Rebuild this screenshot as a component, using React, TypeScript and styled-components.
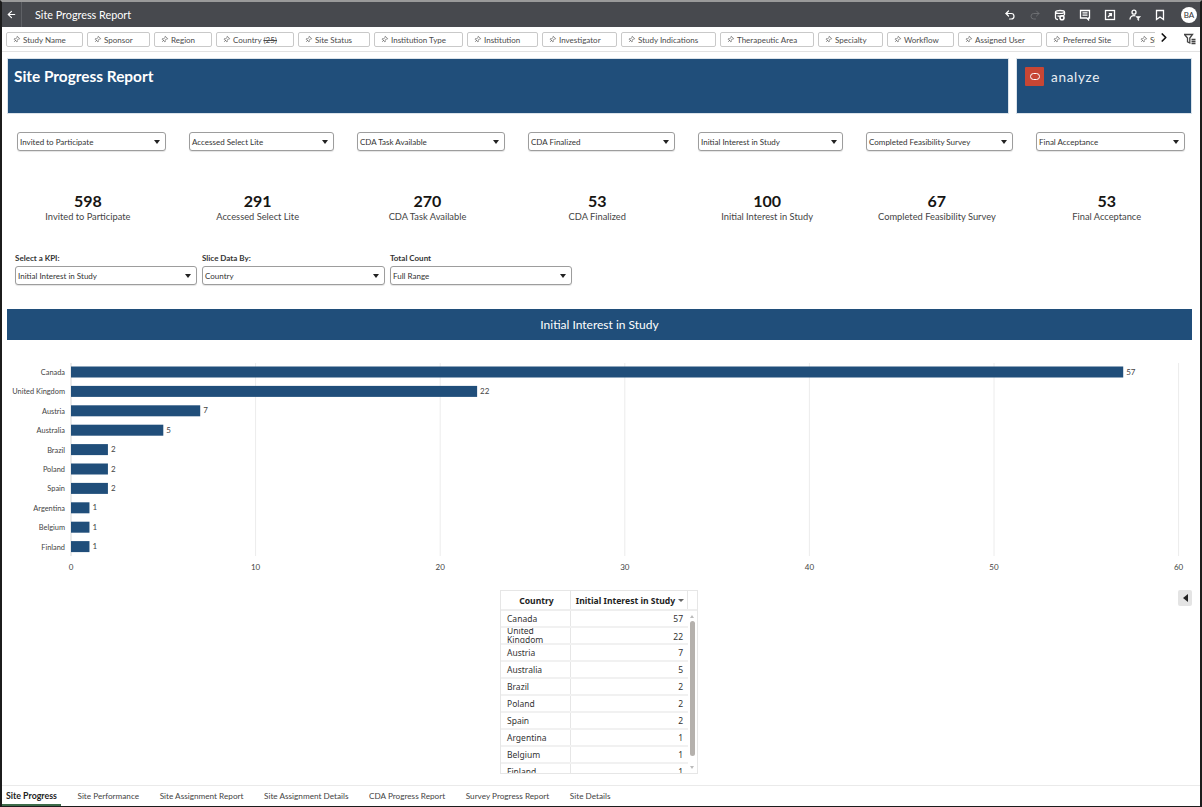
import React from "react";
import styled, { createGlobalStyle } from "styled-components";
import { ArrowLeft, Undo2, Redo2, Pin, ChevronRight } from "lucide-react";

const Global = createGlobalStyle`
  html, body { margin: 0; padding: 0; background: #fff; }
  body { font-family: "Lato", "Noto Sans", "Liberation Sans", sans-serif; color: #2b2b2b; }
  * { box-sizing: border-box; }
`;

const Page = styled.div`
  width: 1202px; height: 807px; overflow: hidden; position: relative; background: #fff;
  border-left: 2px solid #1c1c1c; border-right: 2px solid #1c1c1c; border-bottom: 1px solid #1c1c1c; border-top: 2px solid #9a9a9a;
  display: flex; flex-direction: column;
`;
const TopBar = styled.header`
  height: 25px; flex: none; background: #47494e; color: #fff; display: flex; align-items: center;
`;
const BackCell = styled.div`
  width: 20px; height: 100%; display: flex; align-items: center; justify-content: center; border-right: 1px solid #5f6166;
`;
const TopTitle = styled.div`
  font-size: 10.8px; margin-left: 13px; flex: 1;
`;
const TopIcons = styled.div`
  display: flex; align-items: center; gap: 13px; padding-right: 3px;
`;
const IconSvg = styled.svg.attrs({ viewBox: "0 0 12 12", width: 12, height: 12, fill: "none", stroke: "currentColor" })`
  display: block; flex: none; stroke-width: 1.3;
`;
const Avatar = styled.div`
  width: 16px; height: 16px; margin-left: 2px; border-radius: 50%; background: #fff; color: #333; font-size: 8px;
  display: flex; align-items: center; justify-content: center;
`;
const FilterBar = styled.div`
  height: 25px; flex: none; display: flex; align-items: flex-start; border-bottom: 1px solid #e2e2e2; padding-top: 5px; padding-left: 4px; position: relative;
`;
const Chips = styled.div`
  display: flex; gap: 4px; width: 1149px; overflow: hidden;
`;
const Chip = styled.div<{ $w: number }>`
  flex: none; width: ${p => p.$w}px; height: 15px; border: 1px solid #c9c9c9; border-radius: 2px; background: #fff;
  display: flex; align-items: center; padding-left: 6px; gap: 3px; font-size: 8px; color: #4a4a4a; white-space: nowrap; overflow: hidden;
  s { text-decoration: line-through; }
`;
const ChevronBtn = styled.div`
  width: 14px; display: flex; justify-content: center; margin-left: 2px; margin-top: -2px; color: #111;
`;
const FilterBtn = styled.div`
  margin-left: 13px; margin-top: 1px; color: #444;
`;
const Banners = styled.div`
  display: flex; gap: 7px; padding: 6px 0 0 5px; flex: none;
`;
const Banner = styled.div<{ $w: number }>`
  width: ${p => p.$w}px; height: 56px; background: #204e7a; color: #fff; padding: 8px 6px; display: flex; align-items: flex-start; border: 1px solid #dbe3ea;
`;
const BannerTitle = styled.h1`
  margin: -1px 0 0; font-size: 15.4px; font-weight: 700; line-height: 20px;
`;
const Logo = styled.div`
  width: 19px; height: 19px; background: #c74634; border-radius: 1px; display: flex; align-items: center; justify-content: center; margin: 0 7px 0 2px;
`;
const LogoRing = styled.div`
  width: 10px; height: 7px; border: 1.5px solid #fff; border-radius: 3.5px;
`;
const LogoText = styled.div`
  font-size: 13.5px; line-height: 18px; letter-spacing: 0.7px; color: #e8eef4; margin-top: 1px;
`;
const SelectRow = styled.div`
  display: flex; gap: 23px; padding: 18px 0 0 15px; flex: none;
`;
const Select = styled.div<{ $w: number }>`
  width: ${p => p.$w}px; height: 19px; border: 1px solid #9d9d9d; border-radius: 3px; background: #fff; display: flex; align-items: center; justify-content: space-between;
  padding: 0 5px 0 2px; font-size: 8px; color: #333; box-shadow: 0 1px 1px #e4e4e4;
`;
const Caret = styled.span`
  width: 0; height: 0; border-left: 3.5px solid transparent; border-right: 3.5px solid transparent; border-top: 4px solid #222;
`;
const KpiRow = styled.div`
  display: grid; grid-template-columns: repeat(7, 169.8px); padding: 41px 0 0 1px; flex: none;
`;
const Kpi = styled.div`
  text-align: center;
`;
const KpiValue = styled.div`
  font-size: 16px; font-weight: 700; line-height: 18px; color: #161513;
`;
const KpiLabel = styled.div`
  font-size: 9.3px; line-height: 12px; color: #444; margin-top: 1px;
`;
const Prompts = styled.div`
  display: flex; gap: 5px; padding: 30px 0 0 13px; flex: none;
`;
const Prompt = styled.div`
  display: flex; flex-direction: column; gap: 3px;
`;
const PromptLabel = styled.label`
  font-size: 8px; font-weight: 700; line-height: 10px; color: #333;
`;
const SectionBar = styled.div`
  width: 1185px; height: 31px; margin: 24px 0 0 5px; flex: none; background: #204e7a; color: #fff; font-size: 12px;
  display: flex; align-items: center; justify-content: center;
`;
const ChartSvg = styled.svg`
  display: block; flex: none; margin-top: 15px; margin-left: -2px;
  text { font-family: "Lato", "Noto Sans", sans-serif; font-size: 8px; fill: #444; }
  text.name { font-size: 7.4px; }
`;
const TableArea = styled.div`
  position: relative; flex: none; height: 184px; margin-top: 18px; display: flex; justify-content: flex-start; padding-left: 498px;
`;
const CollapseBtn = styled.div`
  position: absolute; left: 1176px; top: 0; width: 14px; height: 16px; background: #e4e4e4; border-radius: 2px; display: flex; align-items: center; justify-content: center;
  &::before { content: ""; border-top: 4px solid transparent; border-bottom: 4px solid transparent; border-right: 5px solid #222; }
`;
const TableFrame = styled.div`
  width: 198px; height: 184px; border: 1px solid #e6e6e6; position: relative; overflow: hidden;
`;
const Head = styled.div`
  display: grid; grid-template-columns: 70px 117px 9px; height: 20px; border-bottom: 2px solid #eee; font-size: 8.6px; font-weight: 700; color: #222;
  font-family: "Noto Sans", sans-serif;
`;
const HeadCell = styled.div`
  display: flex; align-items: center; justify-content: center; border-right: 1px solid #e6e6e6; gap: 3px; padding: 1px 0 0 2px;
  i { border-left: 3px solid transparent; border-right: 3px solid transparent; border-top: 3px solid #666; }
`;
const Rows = styled.div`
  width: 187px;
`;
const Row = styled.div`
  display: grid; grid-template-columns: 70px 117px; height: 17px; border-bottom: 2px solid #f1f1f1;
  font-family: "Noto Sans", sans-serif; font-size: 8.5px; color: #333; overflow: hidden;
`;
const NameCell = styled.div<{ $wrapped?: boolean }>`
  padding: 0 6px; border-right: 1px solid #e6e6e6; display: flex; align-items: ${p => (p.$wrapped ? "flex-start" : "center")}; line-height: 9px;
  span { display: block; margin-top: ${p => (p.$wrapped ? "-2px" : "0")}; }
`;
const ValueCell = styled.div`
  padding: 0 5px; display: flex; align-items: center; justify-content: flex-end;
`;
const Scroll = styled.div`
  position: absolute; right: 0; top: 20px; bottom: 0; width: 10px;
  &::before { content: ""; position: absolute; left: 3px; top: 10px; bottom: 17px; width: 5px; border-radius: 3px; background: #b5b1ad; }
`;
const ScrollArrow = styled.span<{ $up?: boolean }>`
  position: absolute; left: 3px; ${p => (p.$up ? "top: 4px;" : "bottom: 4px;")} border-left: 2.5px solid transparent; border-right: 2.5px solid transparent;
  ${p => (p.$up ? "border-bottom: 3px solid #bbb;" : "border-top: 3px solid #bbb;")}
`;
const Tabs = styled.nav`
  position: absolute; left: 0; right: 0; bottom: 0; height: 21px; border-top: 1px solid #eaeaea; background: #fff; display: flex; padding-left: 4px; gap: 20.6px; font-size: 8.2px; color: #444;
`;
const Tab = styled.div<{ $active?: boolean }>`
  height: 19px; display: flex; align-items: center; position: relative;
  ${p => p.$active && `
    font-weight: 700; font-size: 8.8px; color: #222;
    &::after { content: ""; position: absolute; left: -4px; right: -4px; bottom: -1px; height: 2px; background: #3d6b4a; }
  `}
`;

const chips: [string, number][] = [["Study Name", 77], ["Sponsor", 63], ["Region", 58], ["Country", 78], ["Site Status", 72], ["Institution Type", 89], ["Institution", 71], ["Investigator", 75], ["Study Indications", 95], ["Therapeutic Area", 94], ["Specialty", 65], ["Workflow", 67], ["Assigned User", 84], ["Preferred Site", 83], ["Study", 60]];
const kpis: [string, number, number][] = [["Invited to Participate", 598, 149], ["Accessed Select Lite", 291, 145], ["CDA Task Available", 270, 148], ["CDA Finalized", 53, 147], ["Initial Interest in Study", 100, 145], ["Completed Feasibility Survey", 67, 147], ["Final Acceptance", 53, 149]];
const data: [string, number][] = [["Canada", 57], ["United Kingdom", 22], ["Austria", 7], ["Australia", 5], ["Brazil", 2], ["Poland", 2], ["Spain", 2], ["Argentina", 1], ["Belgium", 1], ["Finland", 1]];
const tabs = ["Site Progress", "Site Performance", "Site Assignment Report", "Site Assignment Details", "CDA Progress Report", "Survey Progress Report", "Site Details"];

const X0 = 71, UNIT = 18.46;
const Chart = () => (
  <ChartSvg width={1202} height={217} viewBox="0 355 1202 217">
    {[10, 20, 30, 40, 50, 60].map(v => <line key={v} x1={X0 + v * UNIT} x2={X0 + v * UNIT} y1={363} y2={556} stroke="#ececec" />)}
    <line x1={X0} x2={X0} y1={363} y2={556} stroke="#d8d8d8" />
    {data.map(([name, v], i) => {
      const y = 372 + i * 19.4;
      return (
        <g key={name}>
          <text className="name" x={65} y={y + 3} textAnchor="end">{name}</text>
          <rect x={X0} y={y - 5.5} width={v * UNIT} height={11} fill="#204e7a" />
          <text x={X0 + v * UNIT + 3} y={y + 2.5}>{v}</text>
        </g>
      );
    })}
    {[0, 10, 20, 30, 40, 50, 60].map(v => <text key={v} x={X0 + v * UNIT} y={570} textAnchor="middle">{v}</text>)}
  </ChartSvg>
);

const DbIcon = () => (
  <IconSvg>
    <path d="M1.500 3c0-2 9-2 9 0v2.500c0 1.400-4.500 2-7 1.400" />
    <path d="M1.500 3c0 1.800 9 1.800 9 0M1.500 3v6c0 .9 1.200 1.400 2.500 1.600" />
    <circle cx="8" cy="8.800" r="2" strokeWidth="1.600" />
  </IconSvg>
);
const NoteIcon = () => (
  <IconSvg>
    <path d="M1.500 1.500h9v7.500h-1v1.800L7.700 9H1.500z" />
    <path d="M3.500 3.800h5M3.500 6.200h5" />
  </IconSvg>
);
const ExportIcon = () => (
  <IconSvg>
    <rect x="1.500" y="1.500" width="9" height="9" />
    <path d="M4 8l3-3M4.800 4.600h2.600v2.600" />
  </IconSvg>
);
const UserFilterIcon = () => (
  <IconSvg>
    <circle cx="5" cy="3.200" r="2" />
    <path d="M1 10.500c0-2.600 1.600-3.800 4-3.800 .6 0 1 .1 1.400.2" />
    <path d="M7 7.500h4.500L9.700 9.500v2L8.800 11V9.500z" fill="currentColor" strokeWidth=".6" />
  </IconSvg>
);
const BookmarkIcon = () => (
  <IconSvg strokeWidth="1.700">
    <path d="M2.500 1.500h7v9L6 8l-3.500 2.500z" />
  </IconSvg>
);
const FunnelIcon = () => (
  <IconSvg strokeWidth="1.100">
    <path d="M.5 1.500h8L5.800 5v5L3.500 8.800V5z" />
    <path d="M7.500 6.500h4M7.500 8.500h4M7.500 10.500h4" />
  </IconSvg>
);

export default function App() {
  return (
    <Page>
      <Global />
      <TopBar>
        <BackCell><ArrowLeft size={11} strokeWidth={2.4} /></BackCell>
        <TopTitle>Site Progress Report</TopTitle>
        <TopIcons>
          <Undo2 size={12} strokeWidth={2.4} />
          <Redo2 size={12} color="#6d6f73" strokeWidth={2} />
          <DbIcon />
          <NoteIcon />
          <ExportIcon />
          <UserFilterIcon />
          <BookmarkIcon />
          <Avatar>BA</Avatar>
        </TopIcons>
      </TopBar>
      <FilterBar>
        <Chips>
          {chips.map(([c, w]) => (
            <Chip key={c} $w={w}>
              <Pin size={7} style={{ transform: "rotate(45deg)", flex: "none" }} />
              <span>{c}{c === "Country" && <> <s>(25)</s></>}</span>
            </Chip>
          ))}
        </Chips>
        <ChevronBtn><ChevronRight size={15} strokeWidth={3} /></ChevronBtn>
        <FilterBtn><FunnelIcon /></FilterBtn>
      </FilterBar>
      <Banners>
        <Banner $w={1002}><BannerTitle>Site Progress Report</BannerTitle></Banner>
        <Banner $w={176}><Logo><LogoRing /></Logo><LogoText>analyze</LogoText></Banner>
      </Banners>
      <SelectRow>
        {kpis.map(([k, , w]) => <Select key={k} $w={w}>{k}<Caret /></Select>)}
      </SelectRow>
      <KpiRow>
        {kpis.map(([k, v]) => <Kpi key={k}><KpiValue>{v}</KpiValue><KpiLabel>{k}</KpiLabel></Kpi>)}
      </KpiRow>
      <Prompts>
        <Prompt><PromptLabel>Select a KPI:</PromptLabel><Select $w={182}>Initial Interest in Study<Caret /></Select></Prompt>
        <Prompt><PromptLabel>Slice Data By:</PromptLabel><Select $w={183}>Country<Caret /></Select></Prompt>
        <Prompt><PromptLabel>Total Count</PromptLabel><Select $w={182}>Full Range<Caret /></Select></Prompt>
      </Prompts>
      <SectionBar>Initial Interest in Study</SectionBar>
      <Chart />
      <TableArea>
        <TableFrame>
          <Head>
            <HeadCell>Country</HeadCell>
            <HeadCell>Initial Interest in Study<i /></HeadCell>
            <div />
          </Head>
          <Rows>
            {data.map(([n, v]) => (
              <Row key={n}>
                <NameCell $wrapped={n === "United Kingdom"}><span>{n}</span></NameCell>
                <ValueCell>{v}</ValueCell>
              </Row>
            ))}
          </Rows>
          <Scroll><ScrollArrow $up /><ScrollArrow /></Scroll>
        </TableFrame>
        <CollapseBtn />
      </TableArea>
      <Tabs>
        {tabs.map((t, i) => <Tab key={t} $active={i === 0}>{t}</Tab>)}
      </Tabs>
    </Page>
  );
}
